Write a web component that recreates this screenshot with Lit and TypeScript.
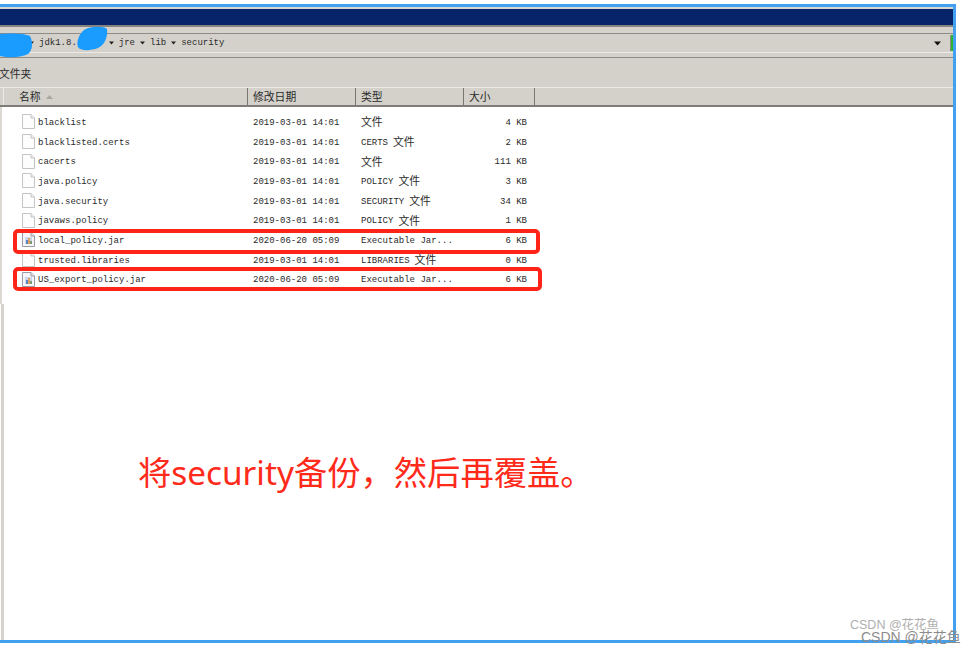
import { LitElement, html, css, svg } from 'lit';
import { customElement } from 'lit/decorators.js';

type FileRow = { name: string; date: string; type: string; zh?: boolean; size: string; jar?: boolean };

const files: FileRow[] = [
	{ name: 'blacklist', date: '2019-03-01 14:01', type: '', zh: true, size: '4 KB' },
	{ name: 'blacklisted.certs', date: '2019-03-01 14:01', type: 'CERTS', zh: true, size: '2 KB' },
	{ name: 'cacerts', date: '2019-03-01 14:01', type: '', zh: true, size: '111 KB' },
	{ name: 'java.policy', date: '2019-03-01 14:01', type: 'POLICY', zh: true, size: '3 KB' },
	{ name: 'java.security', date: '2019-03-01 14:01', type: 'SECURITY', zh: true, size: '34 KB' },
	{ name: 'javaws.policy', date: '2019-03-01 14:01', type: 'POLICY', zh: true, size: '1 KB' },
	{ name: 'local_policy.jar', date: '2020-06-20 05:09', type: 'Executable Jar...', size: '6 KB', jar: true },
	{ name: 'trusted.libraries', date: '2019-03-01 14:01', type: 'LIBRARIES', zh: true, size: '0 KB' },
	{ name: 'US_export_policy.jar', date: '2020-06-20 05:09', type: 'Executable Jar...', size: '6 KB', jar: true },
];

const arrow = html`<svg class="arrow" width="5" height="4" viewBox="0 0 5 4"><path d="M0 0.5H5L2.5 3.5Z" fill="#222"></path></svg>`;

const docIcon = html`<svg class="icon" width="13" height="15" viewBox="0 0 13 15">
	<path d="M0.5 0.5H9L12.5 4V14.5H0.5Z" fill="#fdfdfd" stroke="#c4c4c4"></path>
	<path d="M9 0.5V4H12.5" fill="#efefef" stroke="#c4c4c4"></path>
</svg>`;

const jarIcon = html`<svg class="icon" width="13" height="15" viewBox="0 0 13 15">
	<path d="M0.5 0.5H9L12.5 4V14.5H0.5Z" fill="#f6f6f8" stroke="#9a9aa4"></path>
	<path d="M9 0.5V4H12.5" fill="#e6e6ea" stroke="#9a9aa4"></path>
	${svg`<rect x="3" y="5" width="7" height="7" fill="#c9d8ee"></rect>
	<rect x="4" y="8" width="2" height="4" fill="#5b86c4"></rect>
	<rect x="6" y="6" width="2" height="6" fill="#e0a060"></rect>
	<rect x="8" y="9" width="2" height="3" fill="#7a9a6a"></rect>`}
</svg>`;

@customElement('app-root')
export class AppRoot extends LitElement {
	static styles = css`
		:host {
			display: block;
			position: relative;
			width: 976px;
			height: 654px;
			overflow: hidden;
			background: #fff;
			font-family: "Liberation Mono", "Noto Sans CJK SC", monospace;
			font-size: 9px;
			color: #2a2a2a;
		}
		.frame {
			box-sizing: border-box;
			width: 956px;
			height: 639px;
			margin-top: 4px;
			border-top: 3px solid #42a0f0;
			border-right: 3px solid #42a0f0;
			border-bottom: 3px solid #42a0f0;
			display: flex;
			flex-direction: column;
		}
		.title {
			height: 16px;
			background: #07246a;
			border-top: 2px solid #d9d6d0;
			border-bottom: 2px solid #85847f;
		}
		.menu {
			height: 6px;
			background: #d6d3cd;
			border-bottom: 1px solid #8f8c88;
		}
		.addr {
			box-sizing: border-box;
			height: 24px;
			background: #d4d1cb;
			border-bottom: 1px solid #8f8c88;
		}
		.addr-line {
			box-sizing: border-box;
			height: 19px;
			border-bottom: 1px solid #eceae6;
			padding-left: 29px;
			display: flex;
			align-items: center;
			gap: 5px;
		}
		.hidden-name {
			width: 22px;
		}
		.drop {
			margin-left: auto;
			margin-right: 4px;
		}
		.go {
			box-sizing: border-box;
			width: 3px;
			height: 16px;
			background: #2fb52f;
			border-left: 1px solid #8a8a86;
		}
		.tools {
			box-sizing: border-box;
			height: 30px;
			background: #d4d1cb;
			border-bottom: 1px solid #eceae6;
			display: flex;
			align-items: center;
			font: 10.8px "Noto Sans CJK SC", sans-serif;
			margin-left: -1px;
		}
		.head {
			height: 17px;
			background: #d4d1cb;
			border-bottom: 2px solid #7d7c78;
			display: flex;
			font: 10.8px/17px "Noto Sans CJK SC", sans-serif;
		}
		.head-edge {
			width: 4px;
			border-right: 1px solid #eceae6;
			box-sizing: border-box;
		}
		.col {
			box-sizing: border-box;
			padding-left: 5px;
			border-right: 1px solid #77766f;
			display: flex;
			align-items: center;
		}
		.col.name {
			width: 244px;
			padding-left: 15px;
			gap: 5px;
		}
		.col.date,
		.col.type {
			width: 108px;
		}
		.col.size {
			width: 71px;
		}
		.sort {
			display: block;
		}
		.body {
			flex: 1;
			display: flex;
			min-height: 0;
		}
		.strip {
			width: 4px;
			display: flex;
			flex-direction: column;
		}
		.strip-top {
			width: 2px;
			height: 197px;
			background: #dcd9d4;
		}
		.strip-bottom {
			flex: 1;
			width: 3px;
			margin-left: 1px;
			background: #d6d3cd;
		}
		.content {
			flex: 1;
			padding-top: 6px;
		}
		.rows {
			display: grid;
			grid-template-columns: 243px 108px 108px 71px;
			grid-auto-rows: 19.7px;
			align-items: center;
		}
		.file {
			display: flex;
			align-items: center;
			gap: 3px;
			padding-left: 18px;
		}
		.icon {
			flex: none;
			margin-top: -2px;
		}
		.cell {
			padding-left: 6px;
			white-space: pre;
			display: flex;
			align-items: center;
			gap: 5px;
		}
		.num {
			padding-right: 7px;
			text-align: right;
		}
		.zh {
			font: 10.8px/12px "Noto Sans CJK SC", sans-serif;
			margin-bottom: 3px;
		}
		.note {
			margin: 162px 0 0 134px;
			font: 33.3px/40px "Noto Sans", "Noto Sans CJK SC", sans-serif;
			color: #ff2a1a;
			white-space: nowrap;
		}
		.mark {
			position: absolute;
			box-sizing: border-box;
			border: 4px solid #ff2318;
			border-radius: 5px;
		}
		.mark.one {
			left: 13px;
			top: 229px;
			width: 527px;
			height: 25px;
		}
		.mark.two {
			left: 13px;
			top: 267px;
			height: 24px;
			width: 529px;
		}
		.blobs {
			position: absolute;
			left: 0;
			top: 0;
		}
		.wm {
			position: absolute;
			white-space: nowrap;
			font-family: "Liberation Sans", "Noto Sans CJK SC", sans-serif;
		}
		.wm.a {
			left: 850px;
			top: 617px;
			font-size: 12.5px;
			line-height: 16px;
			color: #b0b0b0;
		}
		.wm.b {
			left: 861px;
			top: 629px;
			font-size: 14px;
			line-height: 17px;
			color: #8c8c8c;
		}
	`;

	render() {
		return html`
			<div class="frame">
				<div class="title"></div>
				<div class="menu"></div>
				<div class="addr">
					<div class="addr-line">
						${arrow}
						<span>jdk1.8.</span>
						<span class="hidden-name"></span>
						${arrow}
						<span>jre</span>
						${arrow}
						<span>lib</span>
						${arrow}
						<span>security</span>
						<svg class="drop" width="7" height="5" viewBox="0 0 7 5"><path d="M0 0.5H7L3.5 4.5Z" fill="#111"></path></svg>
						<span class="go"></span>
					</div>
				</div>
				<div class="tools">文件夹</div>
				<div class="head">
					<div class="head-edge"></div>
					<div class="col name">名称
						<svg class="sort" width="7" height="4" viewBox="0 0 7 4"><path d="M3.5 0L7 4H0Z" fill="#aaa7a0"></path></svg>
					</div>
					<div class="col date">修改日期</div>
					<div class="col type">类型</div>
					<div class="col size">大小</div>
				</div>
				<div class="body">
					<div class="strip">
						<div class="strip-top"></div>
						<div class="strip-bottom"></div>
					</div>
					<div class="content">
						<div class="rows">
							${files.map(
								(f) => html`
									<div class="file">${f.jar ? jarIcon : docIcon}<span>${f.name}</span></div>
									<div class="cell">${f.date}</div>
									<div class="cell">${f.type ? html`<span>${f.type}</span>` : ''}${f.zh ? html`<span class="zh">文件</span>` : ''}</div>
									<div class="num">${f.size}</div>
								`,
							)}
						</div>
						<div class="note">将security备份，然后再覆盖。</div>
					</div>
				</div>
			</div>
			<div class="mark one"></div>
			<div class="mark two"></div>
			<svg class="blobs" width="120" height="60" viewBox="0 0 120 60">
				<path d="M0 34C10 33 25 33 30 36C33 42 33 50 28 54C20 58 8 58 0 56Z" fill="#1a9cff"></path>
				<path d="M84 30C90 26 104 26 107 29C108 36 105 45 98 48C90 51 80 51 78 47C76 42 79 34 84 30Z" fill="#1a9cff"></path>
			</svg>
			<div class="wm a">CSDN @花花鱼</div>
			<div class="wm b">CSDN @花花鱼</div>
		`;
	}
}
